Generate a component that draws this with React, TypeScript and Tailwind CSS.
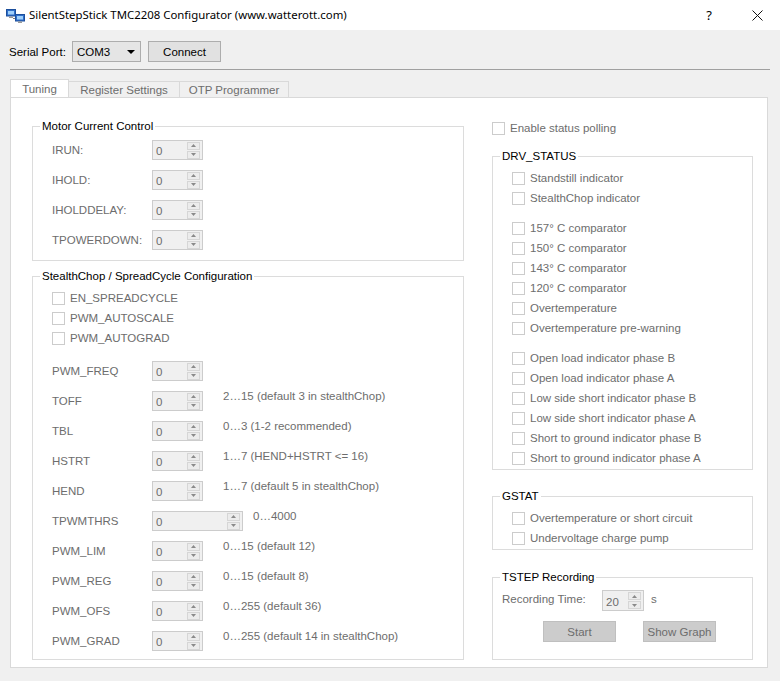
import React from "react";

const GRAY = "text-[#6d6d6d]";

function Spin({ w = 50, h = 20, value = "0" }: { w?: number; h?: number; value?: string }) {
  return (
    <div
      className="flex items-center justify-between border border-[#cccccc] bg-[#f0f0f0] pr-[2px] pl-[3px]"
      style={{ width: w, height: h }}
    >
      <span className="text-[#6d6d6d] leading-[14px] mt-[2px]">{value}</span>
      <div className="flex flex-col">
        <div className="flex h-[8px] w-[13px] items-center justify-center border border-[#d6d6d6] bg-[#ececec]">
          <svg width="5" height="3" viewBox="0 0 5 3">
            <path d="M2.5 0 L5 3 L0 3 Z" fill="#8a8a8a" />
          </svg>
        </div>
        <div className="mt-px flex h-[8px] w-[13px] items-center justify-center border border-[#d6d6d6] bg-[#ececec]">
          <svg width="5" height="3" viewBox="0 0 5 3">
            <path d="M0 0 L5 0 L2.5 3 Z" fill="#8a8a8a" />
          </svg>
        </div>
      </div>
    </div>
  );
}

function Check({ label }: { label: string }) {
  return (
    <div className="flex h-[20px] items-center">
      <span className="h-[13px] w-[13px] shrink-0 border border-[#cccccc] bg-white" />
      <span className={`ml-[5px] whitespace-nowrap ${GRAY}`}>{label}</span>
    </div>
  );
}

function Group({
  title,
  className = "",
  children,
}: {
  title: string;
  className?: string;
  children: React.ReactNode;
}) {
  return (
    <fieldset className={`min-w-0 border border-[#dcdcdc] ${className}`}>
      <legend className="ml-[7px] px-[2px] leading-[14px] text-black">{title}</legend>
      {children}
    </fieldset>
  );
}

function Row({ label, wide, desc }: { label: string; wide?: boolean; desc?: string }) {
  return (
    <div className="flex h-[30px] items-center">
      <span className={`w-[100px] shrink-0 ${GRAY}`}>{label}</span>
      <Spin w={wide ? 91 : 51} />
      {desc && (
        <span className={`self-start mt-[3px] whitespace-nowrap ${wide ? "ml-[10px]" : "ml-[20px]"} ${GRAY}`}>
          {desc}
        </span>
      )}
    </div>
  );
}

function AppIcon() {
  return (
    <svg width="19" height="14" viewBox="0 0 19 14">
      <rect x="0.5" y="0.5" width="9" height="6.5" fill="#2f6fc9" stroke="#1c4f9c" />
      <rect x="2" y="2" width="6" height="3.5" fill="#9fd0fb" />
      <rect x="3" y="7.5" width="4" height="1.5" fill="#9a9a9a" />
      <path d="M7 9.5 L11 9.5" stroke="#7a7a7a" />
      <rect x="9.5" y="5.5" width="9" height="6.5" fill="#2f6fc9" stroke="#1c4f9c" />
      <rect x="11" y="7" width="6" height="3.5" fill="#9fd0fb" />
      <rect x="12" y="12.5" width="4" height="1.5" fill="#9a9a9a" />
    </svg>
  );
}

export default function App() {
  return (
    <div className="h-[681px] w-[780px] overflow-hidden bg-[#f0f0f0] font-['Liberation_Sans',sans-serif] text-[11.5px] leading-[14px] text-black">
      {/* title bar */}
      <div className="flex h-[30px] items-center bg-white">
        <div className="ml-[6px] mt-[1px]">
          <AppIcon />
        </div>
        <span className="ml-[4px] font-['Noto_Sans',sans-serif] text-[11.4px]">
          SilentStepStick TMC2208 Configurator (www.watterott.com)
        </span>
        <span className="ml-auto mr-[40px] font-['Noto_Sans',sans-serif] text-[13px]">?</span>
        <svg className="mr-[17px]" width="11" height="11" viewBox="0 0 11 11">
          <path d="M0.5 0.5 L10.5 10.5 M10.5 0.5 L0.5 10.5" stroke="#111" strokeWidth="1" />
        </svg>
      </div>

      <div className="h-[649px]">
        {/* serial port row */}
        <div className="mt-[11px] flex h-[21px] items-center pl-[9px]">
          <span className="w-[63px]">Serial Port:</span>
          <div className="flex h-[21px] w-[69px] items-center justify-between border border-[#adadad] bg-[#e5e5e5] pl-[4px] pr-[5px]">
            <span>COM3</span>
            <svg width="8" height="4" viewBox="0 0 8 4">
              <path d="M0 0 L8 0 L4 4 Z" fill="#000" />
            </svg>
          </div>
          <button className="ml-[7px] flex h-[21px] w-[73px] items-center justify-center border border-[#adadad] bg-[#e1e1e1]">
            Connect
          </button>
        </div>

        <div className="ml-[10px] mt-[7px] h-px w-[760px] bg-[#a0a0a0]" />

        {/* tabs */}
        <div className="ml-[10px] mt-[9px] flex h-[18px] items-end">
          <div className={`flex h-[18px] w-[59px] items-center justify-center border border-b-0 border-[#d9d9d9] bg-white ${GRAY}`}>
            Tuning
          </div>
          <div className={`flex h-[16px] w-[111px] items-center justify-center border border-l-0 border-b-0 border-[#d9d9d9] bg-[#f0f0f0] ${GRAY}`}>
            Register Settings
          </div>
          <div className={`flex h-[16px] w-[109px] items-center justify-center border border-l-0 border-b-0 border-[#d9d9d9] bg-[#f0f0f0] ${GRAY}`}>
            OTP Programmer
          </div>
        </div>

        {/* tab panel */}
        <div className="ml-[10px] flex h-[571px] w-[758px] border border-[#d9d9d9] bg-white pl-[21px]">
          {/* left column */}
          <div className="w-[432px] pt-[21px]">
            <Group title="Motor Current Control">
              <div className="pl-[19px] pt-[2px] pb-[5px]">
                <Row label="IRUN:" />
                <Row label="IHOLD:" />
                <Row label="IHOLDDELAY:" />
                <Row label="TPOWERDOWN:" />
              </div>
            </Group>

            <Group title="StealthChop / SpreadCycle Configuration" className="mt-[8px]">
              <div className="pl-[19px] pt-[5px] pb-[3px]">
                <Check label="EN_SPREADCYCLE" />
                <Check label="PWM_AUTOSCALE" />
                <Check label="PWM_AUTOGRAD" />
                <div className="mt-[8px]">
                  <Row label="PWM_FREQ" />
                  <Row label="TOFF" desc="2…15 (default 3 in stealthChop)" />
                  <Row label="TBL" desc="0…3 (1-2 recommended)" />
                  <Row label="HSTRT" desc="1…7 (HEND+HSTRT <= 16)" />
                  <Row label="HEND" desc="1…7 (default 5 in stealthChop)" />
                  <Row label="TPWMTHRS" wide desc="0…4000" />
                  <Row label="PWM_LIM" desc="0…15 (default 12)" />
                  <Row label="PWM_REG" desc="0…15 (default 8)" />
                  <Row label="PWM_OFS" desc="0…255 (default 36)" />
                  <Row label="PWM_GRAD" desc="0…255 (default 14 in stealthChop)" />
                </div>
              </div>
            </Group>
          </div>

          {/* right column */}
          <div className="ml-[28px] w-[261px] pt-[20px]">
            <Check label="Enable status polling" />

            <Group title="DRV_STATUS" className="mt-[11px]">
              <div className="pl-[19px] pt-[5px] pb-px">
                <Check label="Standstill indicator" />
                <Check label="StealthChop indicator" />
                <div className="mt-[10px]">
                  <Check label="157° C comparator" />
                  <Check label="150° C comparator" />
                  <Check label="143° C comparator" />
                  <Check label="120° C comparator" />
                  <Check label="Overtemperature" />
                  <Check label="Overtemperature pre-warning" />
                </div>
                <div className="mt-[10px]">
                  <Check label="Open load indicator phase B" />
                  <Check label="Open load indicator phase A" />
                  <Check label="Low side short indicator phase B" />
                  <Check label="Low side short indicator phase A" />
                  <Check label="Short to ground indicator phase B" />
                  <Check label="Short to ground indicator phase A" />
                </div>
              </div>
            </Group>

            <Group title="GSTAT" className="mt-[19px]">
              <div className="pl-[19px] pt-[5px] pb-px">
                <Check label="Overtemperature or short circuit" />
                <Check label="Undervoltage charge pump" />
              </div>
            </Group>

            <Group title="TSTEP Recording" className="mt-[20px]">
              <div className="pl-[9px] pt-[6px] pb-[17px]">
                <div className="flex h-[21px] items-center">
                  <span className={`w-[100px] -mt-[3px] ${GRAY}`}>Recording Time:</span>
                  <Spin w={42} h={21} value="20" />
                  <span className={`ml-[7px] -mt-[3px] ${GRAY}`}>s</span>
                </div>
                <div className="mt-[10px] flex pl-[41px]">
                  <button className={`flex h-[21px] w-[73px] items-center justify-center border border-[#bfbfbf] bg-[#cccccc] ${GRAY}`}>
                    Start
                  </button>
                  <button className={`ml-[27px] flex h-[21px] w-[73px] items-center justify-center border border-[#bfbfbf] bg-[#cccccc] ${GRAY}`}>
                    Show Graph
                  </button>
                </div>
              </div>
            </Group>
          </div>
        </div>
      </div>

      <div className="h-[2px] bg-[#202020]" />
    </div>
  );
}
